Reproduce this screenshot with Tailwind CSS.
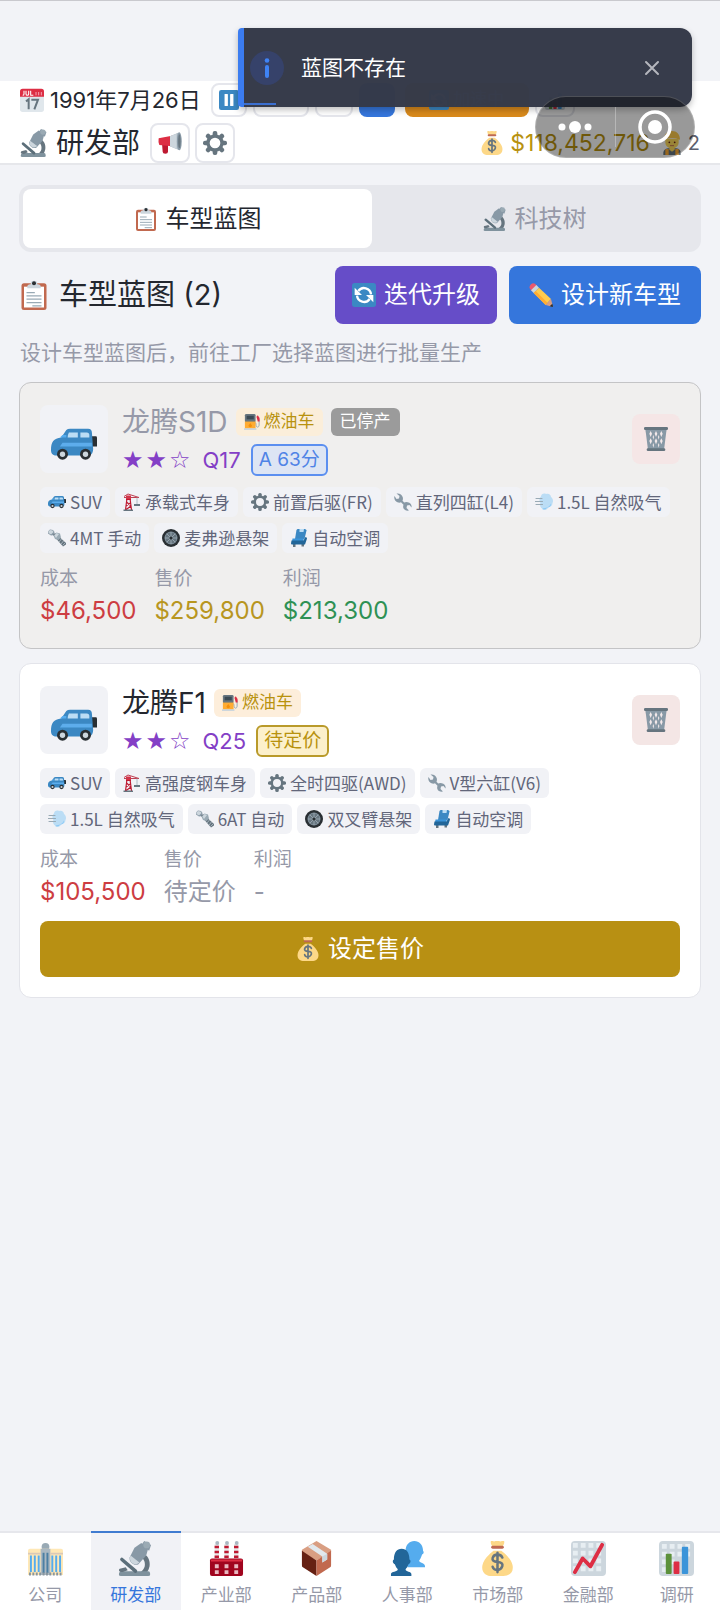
<!DOCTYPE html>
<html lang="zh-CN">
<head>
<meta charset="utf-8">
<meta name="viewport" content="width=device-width, initial-scale=1">
<title>研发部</title>
<script src="https://cdn.jsdelivr.net/npm/@tailwindcss/browser@4"></script>
</head>
<body class="min-h-screen flex flex-col bg-[#f2f3f7] border-t border-[#c9c9ce] text-[#24272f] font-['Inter','Noto_Sans_CJK_SC',sans-serif]">

<svg class="hidden" aria-hidden="true">
  <symbol id="calendar" viewBox="0 0 36 36"><path fill="#E0E7EC" d="M36 32a4 4 0 0 1-4 4H4a4 4 0 0 1-4-4V9h36z"/><path fill="#DD2E44" d="M0 13V5a4 4 0 0 1 4-4h28a4 4 0 0 1 4 4v8z"/><path fill="none" stroke="#fff" stroke-width="1.6" d="M6 4v5q0 2-2 2M9 4v5q0 2 2 2t2-2V4M16 4v7h4"/><path stroke="#F4ABBA" stroke-width="1.4" d="M24 6v5M28 6v5M32 6v5"/><path fill="none" stroke="#66757F" stroke-width="3" d="m9 20 4-3v15M17 17.500h10l-5.500 14.500"/></symbol>
  <symbol id="pause" viewBox="0 0 36 36"><rect width="36" height="36" rx="4" fill="#3B88C3"/><rect x="10" y="7" width="6" height="22" rx="1" fill="#fff"/><rect x="20" y="7" width="6" height="22" rx="1" fill="#fff"/></symbol>
  <symbol id="scope" viewBox="0 0 36 36"><path fill="#66757F" d="M19 35s7.500-4 8.500-9-2-9-5-10l2-4c6 2 9 8 8 14-1 5-4 8-5 9z"/><path fill="#7F929D" d="M4 31h27q2 0 2 2.500V35q0 1-2 1H3q-2 0-2-1v-1q0-3 3-3z"/><path fill="#66757F" d="M1 30q0-2 3-2l4-1 2 3-5 2q-4 0-4-2z"/><path stroke="#5C6F7A" stroke-width="3.600" stroke-linecap="round" d="m4 19 14 12"/><path fill="#8899A6" d="m17 7 7-5 7 6-2 7-8 9c-4 2-10-2-9-7z"/><path fill="#CCD6DD" d="m13 15 9 7c-3 3-7 2-9-1-1-2-1-4 0-6z"/><path fill="#8899A6" d="m24 4 3-4 7 4-2 6z"/><circle cx="29.500" cy="4" r="3.500" fill="#9AAAB4"/></symbol>
  <symbol id="horn" viewBox="0 0 36 36"><path fill="#BE1931" d="M6 18h9v13q0 3-4 3t-4-3z"/><path fill="#DD2E44" d="m1 11 20-4v16L2 21q-2-4-1-10z"/><path fill="#AAB8C2" d="m18 8 14-6v27l-14-6z"/><path fill="#CCD6DD" d="m18 8 10-4v23l-10-4z"/><ellipse cx="32" cy="15.500" rx="3.600" ry="13.500" fill="#8899A6"/><ellipse cx="32" cy="15.500" rx="1.800" ry="10.500" fill="#66757F"/></symbol>
  <symbol id="gear" viewBox="0 0 36 36"><g fill="#66757F"><rect id="tooth" x="14.500" y="0" width="7" height="9" rx="3"/><use href="#tooth" transform="rotate(45 18 18)"/><use href="#tooth" transform="rotate(90 18 18)"/><use href="#tooth" transform="rotate(135 18 18)"/><use href="#tooth" transform="rotate(180 18 18)"/><use href="#tooth" transform="rotate(225 18 18)"/><use href="#tooth" transform="rotate(270 18 18)"/><use href="#tooth" transform="rotate(315 18 18)"/></g><circle cx="18" cy="18" r="10.500" fill="none" stroke="#66757F" stroke-width="5"/></symbol>
  <symbol id="bag" viewBox="0 0 36 36"><path fill="#FDD888" d="M22 10s10 7 11.500 15C35 33 29 36 24 36H12C7 36 1 33 2.500 25 4 17 14 10 14 10z"/><path fill="#FDD888" d="M11 1q0-1.500 2-1 1.500 1 3 0 2-1 3.500 0 1.500 1 3 0 2.500-1 2.500 1c0 2-1 4-2.500 5h-9C12 5 11 3 11 1z"/><rect x="11.500" y="5" width="13" height="3" rx="1.500" fill="#BF6952"/><path fill="none" stroke="#67757F" stroke-width="2.600" stroke-linecap="round" d="M23 17q-1-3-5-3t-5 3.500 5 4 5 4.200-5 4-5-3.200M18 12v20"/></symbol>
  <symbol id="worker" viewBox="0 0 36 36"><path fill="#66757F" d="M5 36v-3c0-5 5-7 8-7h10c4 0 8 2 8 7v3z"/><path fill="#FFAC33" d="M8 27h5v9H8zM23 27h5v9h-5z"/><path fill="#FFDC5D" d="M14 22h8v6l-4 3-4-3z"/><path fill="#FFDC5D" d="M8 12h20v5c0 6-5 9-10 9S8 23 8 17z"/><path fill="#FFCC4D" d="M6 13C6 5 11 0 18 0s12 5 12 13q-12-4-24 0z"/><circle cx="14" cy="17" r="1.300" fill="#662113"/><circle cx="22" cy="17" r="1.300" fill="#662113"/><path stroke="#C1694F" stroke-width="1.400" d="M15 22h6"/></symbol>
  <symbol id="clip" viewBox="0 0 36 36"><rect x="3" y="4" width="30" height="32" rx="3" fill="#C1694F"/><path fill="#fff" d="M6 8h24v25H6z"/><path fill="#CCD6DD" d="M10 10q-1-5 4-5 0-4 4-4t4 4q5 0 4 5z"/><circle cx="18" cy="4" r="2.400" fill="#292F33"/><path stroke="#99AAB5" stroke-width="1.500" d="M9 15h10M9 19h18M9 23h18M9 27h18M16 31h11"/></symbol>
  <symbol id="refresh" viewBox="0 0 36 36"><rect width="36" height="36" rx="4" fill="#3B88C3"/><path fill="none" stroke="#fff" stroke-width="3.500" d="M28.500 17A10.500 10.500 0 0 0 9.500 12M7.500 19a10.500 10.500 0 0 0 19 5"/><path fill="#fff" d="M4 7v11h11zM32 29V18H21z"/></symbol>
  <symbol id="pencil" viewBox="0 0 36 36"><path fill="#EA596E" d="M1 8q-1-3 2-6t6-1l3 3-8 8z"/><path fill="#CCD6DD" d="m3 11 8-8 4 4-8 8z"/><path fill="#FFCC4D" d="m7 15 8-8 18 17-8 9z"/><path fill="#FFAC33" d="m7 15 3-3 18 18-3 3z"/><path fill="#D99E82" d="m25 33 8-9 3 12z"/><path fill="#292F33" d="m31 35 4-4 1 4q0 1-1 1z"/></symbol>
  <symbol id="car" viewBox="0 0 36 36"><path fill="#292F33" d="M32 12h3q1 0 1 1v7h-4z"/><path fill="#3B88C3" d="M12 7q1-1 3-1h14q3 0 3 3l1 13q0 4-3 5H3q-3-1-3-4c0-7 2-9 8-10z"/><path fill="#BBDDF5" d="M14 9h7v4h-8q0-2 1-4zM23 9h5q2 0 2 2v2h-7z"/><path fill="#5DADEC" d="M9 17h23v3H7z"/><path fill="#55ACEE" d="M9 11h3v2H7z"/><circle cx="9" cy="26" r="4.300" fill="#292F33"/><circle cx="9" cy="26" r="2.100" fill="#CCD6DD"/><circle cx="27" cy="26" r="4.300" fill="#292F33"/><circle cx="27" cy="26" r="2.100" fill="#CCD6DD"/></symbol>
  <symbol id="fuel" viewBox="0 0 36 36"><path fill="none" stroke="#99AAB5" stroke-width="2.200" d="M24 19q4 0 3 6c0 6 7 6 7 0V13l-3-5"/><path fill="#DD2E44" d="m28 6 3-3 4 6v8h-4z"/><rect x="2" y="0" width="24" height="19" rx="3" fill="#66757F"/><path fill="#FFAC33" d="M2 17h24v16H2z"/><path fill="#3B4A54" d="M6 4h16v8H6z"/><path fill="#F4900C" d="m14 20 4 6q0 4-4 4t-4-4z"/><path fill="#CCD6DD" d="M0 32h28v4H0z"/></symbol>
  <symbol id="crane" viewBox="0 0 36 36"><path fill="none" stroke="#BE1931" stroke-width="2.400" d="M5 34 8 10h6l3 24M6 26l10-7M7 18l9 8M5 34l11-8M6 13h10"/><path fill="#DD2E44" d="M6 5h10v7H6z"/><path fill="none" stroke="#BE4052" stroke-width="2" d="m2 7 8-5 22 7H2"/><path stroke="#99AAB5" stroke-width="1.500" d="M28 9v13"/><path fill="#66757F" d="M22 22h12v4H22z"/><path fill="#66757F" d="M1 33h19v3H1z"/></symbol>
  <symbol id="wrench" viewBox="0 0 36 36"><path fill="#8899A6" d="M27.500 18.500q-4-1-7 .5L17 15.500q1.500-3 .5-7C16 3 11 0 5 1l6 5-1 5-5 1-4-6c-2 6 2 12 7 13 3 .7 5 0 6-.7l5 5c-.7 2-1 4-.3 6.500C20 34 25 36 30 35l-5-5 1-5 5-1 4 5c1-5-2-9.500-7.500-10.500z"/></symbol>
  <symbol id="wind" viewBox="0 0 36 36"><path fill="#BBDDF5" d="M12 7c0-5 6-7 10-5 5-2 10 1 10 6 4 3 5 8 3 12 0 5-4 8-8 8-3 7-11 8-13 3-4-2-5-8-3-11-3-4-3-9 1-13z"/><path fill="#8CCAF7" d="M20 30c5-1 9-3 12-9 1 6-5 9-8 8-2 4-6 5-9 2z"/><path fill="none" stroke="#99AAB5" stroke-width="2.200" stroke-linecap="round" d="M2 11h12M0 17h15M2 23h13"/></symbol>
  <symbol id="bolt" viewBox="0 0 36 36"><path fill="#8899A6" d="m4 1 6 1 3 4-1 6-6 1-6-4V5z"/><path fill="#CCD6DD" d="m4 2 5 1 2 3-5 5-5-3V5z"/><path fill="#66757F" d="m10 12 4-4 22 20v3l-6 4z"/><path stroke="#AAB8C2" stroke-width="1.800" d="m22 26 5-6M26 30l5-6M29 33l6-6"/><path fill="#9AAAB4" d="m17 7 7 2 2 8-5 5-7-2-3-7z"/><path fill="#CCD6DD" d="m17 8 5 2-6 8-3-5z"/></symbol>
  <symbol id="wheel" viewBox="0 0 36 36"><circle cx="18" cy="18" r="18" fill="#292F33"/><circle cx="18" cy="18" r="12.500" fill="#66757F"/><circle cx="18" cy="18" r="12" fill="none" stroke="#8899A6" stroke-width="1.500"/><path stroke="#AAB8C2" stroke-width="1.400" d="M18 6v24M6 18h24M9.500 9.500l17 17M9.500 26.500l17-17"/><circle cx="18" cy="18" r="3" fill="#292F33"/></symbol>
  <symbol id="seat" viewBox="0 0 36 36"><path fill="#66757F" d="M6 30h5v6H6zM23 30h5v5h-5z"/><path fill="#3B88C3" d="M13 2q1-2 3-2h13q4 0 4 3l-4 17H10z"/><path fill="#BBDDF5" d="M19 0h9l-1 6h-8z"/><path fill="#3B94D9" d="M5 19h23l-2 6H4z"/><path fill="#226699" d="M3 23h24l4-7q3 0 3 3l-4 12H4q-2 0-2-2z"/></symbol>
  <symbol id="trash" viewBox="0 0 36 36"><path fill="#8899A6" d="M2 3h32l-4 31H6z"/><g fill="#F3E9EA"><path d="m10 6 2 4-2 5-2-5zM18 6l2 4-2 5-2-5zM26 6l2 4-2 5-2-5zM10 17l2 4-2 5-2-5zM18 17l2 4-2 5-2-5zM26 17l2 4-2 5-2-5zM14 12l1 3-1 4-1-4zM22 12l1 3-1 4-1-4zM14 24l1 3-1 4-1-4zM22 24l1 3-1 4-1-4z"/></g><rect x="0" y="0" width="36" height="4.500" rx="2" fill="#66757F"/><rect x="4" y="32" width="28" height="4" rx="2" fill="#66757F"/></symbol>
  <symbol id="building" viewBox="0 0 36 36"><circle cx="18" cy="6" r="4" fill="#99AAB5"/><path fill="#FFE8B6" d="M0 10q0-2 2-2h32q2 0 2 2v25H0z"/><path fill="#AAB8C2" d="M13 8h10v27H13z"/><path fill="#DCC9B6" d="M0 12h13v2H0zM23 12h13v2H23z"/><path stroke="#55ACEE" stroke-width="2" d="M3 15v17M7 15v17M11 15v17M25 15v17M29 15v17M33 15v17"/><path stroke="#4C7FA3" stroke-width="2" d="M16 12v21M20 12v21"/><path stroke="#88959E" stroke-width="3" stroke-dasharray="2 1.500" d="M1 34h34"/></symbol>
  <symbol id="factory" viewBox="0 0 36 36"><g stroke-width="4.500"><path stroke="#E6E7E8" d="M8 3v16M18 3v16M28 3v16"/><path stroke="#BE1931" stroke-dasharray="2.500 2.500" d="M8 5v14M18 5v14M28 5v14"/></g><circle cx="8.500" cy="2" r="2" fill="#AAB8C2"/><circle cx="18.500" cy="2" r="2" fill="#AAB8C2"/><circle cx="28.500" cy="2" r="2" fill="#AAB8C2"/><rect x="1" y="18" width="34" height="18" rx="2" fill="#A0041E"/><path stroke="#DD2E44" stroke-width="2" d="M2 20h32"/><path fill="#E8B8C0" d="M6 24h4v4H6zM16 24h4v4h-4zM26 24h4v4h-4zM6 30h4v4H6zM16 30h4v4h-4zM26 30h4v4h-4z"/></symbol>
  <symbol id="box" viewBox="0 0 36 36"><path fill="#D99E82" d="m18 0 15 9v2L18 20 3 11V9z"/><path fill="#662113" d="m3 10 15 10v16L4 27q-1 0-1-2z"/><path fill="#C1694F" d="m18 20 15-10v15q0 2-1 2l-14 9z"/><path fill="#E1E8ED" d="m9 6 5-3 15 10v6l-5 3v-6z"/><path fill="#CCD6DD" d="m24 16 5-3v6l-5 3z"/></symbol>
  <symbol id="people" viewBox="0 0 36 36"><path fill="#55ACEE" d="M16 10c0-6 4-10 9-10s9 4 9 10c1 1 1 3-1 4-1 3-2 5-3 6 0 3 6 2 6 6v1H18z"/><path fill="#226699" d="M4 19c0-7 3-11 8-11s8 4 8 11c2 1 1 4-1 5-1 3-2 4-3 5 0 3 6 2 6 5v2H1v-2c0-3 7-2 7-5-1-1-2-2-3-5-2-1-3-4-1-5z"/></symbol>
  <symbol id="chartup" viewBox="0 0 36 36"><rect width="36" height="36" rx="4" fill="#CCD6DD"/><path fill="#E7EEF2" d="M2 2h5v5H2zM10 2h5v5h-5zM18 2h5v5h-5zM26 2h5v5h-5zM2 10h5v5H2zM10 10h5v5h-5zM18 10h5v5h-5zM26 10h5v5h-5zM2 18h5v5H2zM10 18h5v5h-5zM18 18h5v5h-5zM26 18h5v5h-5zM2 26h5v5H2zM10 26h5v5h-5zM18 26h5v5h-5zM26 26h5v5h-5z"/><path fill="none" stroke="#DD2E44" stroke-width="4" stroke-linecap="round" stroke-linejoin="round" d="m4 32 8-14 8 8L32 4"/></symbol>
  <symbol id="bars" viewBox="0 0 36 36"><rect width="36" height="36" rx="4" fill="#CCD6DD"/><path fill="#E7EEF2" d="M3 3h5v5H3zM11 3h5v5h-5zM19 3h5v5h-5zM27 3h5v5h-5zM3 11h5v5H3zM11 11h5v5h-5zM19 11h5v5h-5zM27 11h5v5h-5zM3 19h5v5H3zM11 19h5v5h-5zM3 27h5v5H3z"/><rect x="7" y="13" width="6" height="21" rx="1" fill="#5C913B"/><rect x="15" y="21" width="6" height="13" rx="1" fill="#DD2E44"/><rect x="23.500" y="6" width="6.500" height="28" rx="1" fill="#3B94D9"/></symbol>
</svg>

<header class="mt-20 bg-white border-b-2 border-[#e6e7eb] px-5 pt-0.5 flex flex-col gap-1.5">
  <div class="flex items-center gap-1.5 h-[34px]">
    <p class="flex items-center gap-1.5 text-[22px] whitespace-nowrap mr-1"><svg class="size-6"><use href="#calendar"/></svg>1991年7月26日</p>
    <button aria-label="暂停" class="w-9 h-[34px] rounded-lg border-2 border-[#e5e6ec] flex items-center justify-center"><svg class="size-5"><use href="#pause"/></svg></button>
    <button aria-label="1倍速" class="w-14 h-[34px] rounded-lg border-2 border-[#e5e6ec]"></button>
    <button aria-label="2倍速" class="w-[38px] h-[34px] rounded-lg border-2 border-[#e5e6ec]"></button>
    <button aria-label="3倍速" class="w-9 h-[34px] rounded-lg bg-[#3576dc]"></button>
    <button class="ml-1 w-[124px] h-[34px] rounded-lg bg-[#d98a1c] text-white text-[17px] flex items-center justify-center gap-1"><svg class="size-5"><use href="#refresh"/></svg>加速中</button>
    <button aria-label="统计" class="w-10 h-[34px] rounded-lg border-2 border-[#e5e6ec] flex items-center justify-center"><svg class="size-5"><use href="#bars"/></svg></button>
  </div>
  <div class="flex items-center h-10">
    <h1 class="flex items-center gap-2 text-[28px] leading-10"><svg class="size-7"><use href="#scope"/></svg>研发部</h1>
    <button aria-label="公告" class="ml-2.5 w-10 h-10 rounded-lg border-2 border-[#e5e6ec] flex items-center justify-center"><svg class="size-6"><use href="#horn"/></svg></button>
    <button aria-label="设置" class="ml-[5px] w-10 h-10 rounded-lg border-2 border-[#e5e6ec] flex items-center justify-center"><svg class="size-6"><use href="#gear"/></svg></button>
    <p class="ml-auto flex items-center gap-1.5 text-[23px] text-[#b8920f]"><svg class="size-6"><use href="#bag"/></svg>$118,452,716</p>
    <p class="ml-2.5 flex items-center gap-1 text-xl text-[#5b5f6e]"><svg class="size-6"><use href="#worker"/></svg>2</p>
  </div>
</header>

<main class="flex-1 px-[19px] pt-5 flex flex-col gap-3.5">
  <div role="tablist" class="flex bg-[#e6e7ec] rounded-xl p-1 text-2xl">
    <button role="tab" aria-selected="true" class="flex-auto h-[59px] rounded-lg bg-white flex items-center justify-center gap-2"><svg class="size-6"><use href="#clip"/></svg>车型蓝图</button>
    <button role="tab" aria-selected="false" class="flex-auto h-[59px] flex items-center justify-center gap-2 text-[#9699a8]"><svg class="size-6"><use href="#scope"/></svg>科技树</button>
  </div>

  <div class="flex items-center gap-3 h-[58px] text-2xl">
    <h2 class="flex items-center gap-2.5 text-[29px] whitespace-nowrap mr-auto"><svg class="size-[30px]"><use href="#clip"/></svg>车型蓝图 (2)</h2>
    <button class="h-[58px] px-[17px] rounded-lg bg-[#664dc8] text-white flex items-center gap-2 whitespace-nowrap"><svg class="size-6"><use href="#refresh"/></svg>迭代升级</button>
    <button class="h-[58px] px-5 rounded-lg bg-[#3576dc] text-white flex items-center gap-2 whitespace-nowrap"><svg class="size-6"><use href="#pencil"/></svg>设计新车型</button>
  </div>

  <p class="px-px text-[21px] leading-[30px] text-[#9699a8]">设计车型蓝图后，前往工厂选择蓝图进行批量生产</p>

  <article class="rounded-xl border border-[#c4c4c6] bg-[#f0efee] px-5 pt-[19px] pb-5">
    <div class="flex items-center gap-3.5">
      <div class="size-[68px] rounded-lg bg-[#f1f2f6] flex items-center justify-center"><svg class="size-[46px] mt-2.5"><use href="#car"/></svg></div>
      <div class="flex-1 flex flex-col gap-0.5">
        <div class="flex items-center gap-2 h-10">
          <h3 class="text-[28px] text-[#9699a8]">龙腾S1D</h3>
          <span class="h-7 px-2 rounded-md bg-[#fbeeda] text-[#b8920f] text-[17px] flex items-center gap-1"><svg class="size-4"><use href="#fuel"/></svg>燃油车</span>
          <span class="h-7 px-[9px] rounded-md bg-[#9b9b9b] text-white text-[17px] flex items-center">已停产</span>
        </div>
        <div class="flex items-center h-8 text-[22px]">
          <span class="flex gap-0.5 text-[24px] font-['DejaVu_Sans',sans-serif] text-[#843fc6]" role="img" aria-label="2星"><span>★</span><span>★</span><span>☆</span></span>
          <span class="ml-3 text-[#843fc6]">Q17</span>
          <span class="ml-2.5 h-8 px-1.5 rounded-md border-2 border-[#5b8ff0] bg-[#dde5f4] text-[#4f83e6] text-[19px] flex items-center">A 63分</span>
        </div>
      </div>
      <button aria-label="删除" class="w-12 h-[50px] rounded-lg bg-[#f5e6e6] flex items-center justify-center"><svg class="size-6"><use href="#trash"/></svg></button>
    </div>
    <ul class="mt-[11px] flex flex-wrap gap-x-[5px] gap-y-1.5 text-[17px] leading-[30px] text-[#62667a] font-['Noto_Sans_CJK_SC',sans-serif]">
      <li class="flex items-center gap-1 px-2 rounded-md bg-[#f1f2f6]"><svg class="size-[18px]"><use href="#car"/></svg>SUV</li>
      <li class="flex items-center gap-1 px-2 rounded-md bg-[#f1f2f6]"><svg class="size-[18px]"><use href="#crane"/></svg>承载式车身</li>
      <li class="flex items-center gap-1 px-2 rounded-md bg-[#f1f2f6]"><svg class="size-[18px]"><use href="#gear"/></svg>前置后驱(FR)</li>
      <li class="flex items-center gap-1 px-2 rounded-md bg-[#f1f2f6]"><svg class="size-[18px]"><use href="#wrench"/></svg>直列四缸(L4)</li>
      <li class="flex items-center gap-1 px-2 rounded-md bg-[#f1f2f6]"><svg class="size-[18px]"><use href="#wind"/></svg>1.5L 自然吸气</li>
      <li class="flex items-center gap-1 px-2 rounded-md bg-[#f1f2f6]"><svg class="size-[18px]"><use href="#bolt"/></svg>4MT 手动</li>
      <li class="flex items-center gap-1 px-2 rounded-md bg-[#f1f2f6]"><svg class="size-[18px]"><use href="#wheel"/></svg>麦弗逊悬架</li>
      <li class="flex items-center gap-1 px-2 rounded-md bg-[#f1f2f6]"><svg class="size-[18px]"><use href="#seat"/></svg>自动空调</li>
    </ul>
    <dl class="mt-3 flex gap-[18px] text-2xl leading-[35px]">
      <div><dt class="text-[19px] leading-7 text-[#9699a8]">成本</dt><dd class="text-[#cd3d42]">$46,500</dd></div>
      <div><dt class="text-[19px] leading-7 text-[#9699a8]">售价</dt><dd class="text-[#b8961f]">$259,800</dd></div>
      <div><dt class="text-[19px] leading-7 text-[#9699a8]">利润</dt><dd class="text-[#2e9154]">$213,300</dd></div>
    </dl>
  </article>

  <article class="rounded-xl border border-[#e3e4ea] bg-white px-5 pt-[19px] pb-5">
    <div class="flex items-center gap-3.5">
      <div class="size-[68px] rounded-lg bg-[#f1f2f6] flex items-center justify-center"><svg class="size-[46px] mt-2.5"><use href="#car"/></svg></div>
      <div class="flex-1 flex flex-col gap-0.5">
        <div class="flex items-center gap-2 h-10">
          <h3 class="text-[28px]">龙腾F1</h3>
          <span class="h-7 px-2 rounded-md bg-[#fdeedb] text-[#b8920f] text-[17px] flex items-center gap-1"><svg class="size-4"><use href="#fuel"/></svg>燃油车</span>
        </div>
        <div class="flex items-center h-8 text-[22px]">
          <span class="flex gap-0.5 text-[24px] font-['DejaVu_Sans',sans-serif] text-[#843fc6]" role="img" aria-label="2星"><span>★</span><span>★</span><span>☆</span></span>
          <span class="ml-3 text-[#843fc6]">Q25</span>
          <span class="ml-2.5 h-8 px-1.5 rounded-md border-2 border-[#b99a2a] bg-[#fcf0cb] text-[#b8920f] text-[19px] flex items-center">待定价</span>
        </div>
      </div>
      <button aria-label="删除" class="w-12 h-[50px] rounded-lg bg-[#f4e6e5] flex items-center justify-center"><svg class="size-6"><use href="#trash"/></svg></button>
    </div>
    <ul class="mt-[11px] flex flex-wrap gap-x-[5px] gap-y-1.5 text-[17px] leading-[30px] text-[#62667a] font-['Noto_Sans_CJK_SC',sans-serif]">
      <li class="flex items-center gap-1 px-2 rounded-md bg-[#f1f2f6]"><svg class="size-[18px]"><use href="#car"/></svg>SUV</li>
      <li class="flex items-center gap-1 px-2 rounded-md bg-[#f1f2f6]"><svg class="size-[18px]"><use href="#crane"/></svg>高强度钢车身</li>
      <li class="flex items-center gap-1 px-2 rounded-md bg-[#f1f2f6]"><svg class="size-[18px]"><use href="#gear"/></svg>全时四驱(AWD)</li>
      <li class="flex items-center gap-1 px-2 rounded-md bg-[#f1f2f6]"><svg class="size-[18px]"><use href="#wrench"/></svg>V型六缸(V6)</li>
      <li class="flex items-center gap-1 px-2 rounded-md bg-[#f1f2f6]"><svg class="size-[18px]"><use href="#wind"/></svg>1.5L 自然吸气</li>
      <li class="flex items-center gap-1 px-2 rounded-md bg-[#f1f2f6]"><svg class="size-[18px]"><use href="#bolt"/></svg>6AT 自动</li>
      <li class="flex items-center gap-1 px-2 rounded-md bg-[#f1f2f6]"><svg class="size-[18px]"><use href="#wheel"/></svg>双叉臂悬架</li>
      <li class="flex items-center gap-1 px-2 rounded-md bg-[#f1f2f6]"><svg class="size-[18px]"><use href="#seat"/></svg>自动空调</li>
    </ul>
    <dl class="mt-3 flex gap-[18px] text-2xl leading-[35px]">
      <div><dt class="text-[19px] leading-7 text-[#9699a8]">成本</dt><dd class="text-[#cd3d42]">$105,500</dd></div>
      <div><dt class="text-[19px] leading-7 text-[#9699a8]">售价</dt><dd class="text-[#9699a8]">待定价</dd></div>
      <div><dt class="text-[19px] leading-7 text-[#9699a8]">利润</dt><dd class="text-[#9699a8]">-</dd></div>
    </dl>
    <button class="mt-3 w-full h-14 rounded-lg bg-[#b89013] text-white text-2xl flex items-center justify-center gap-2"><svg class="size-6"><use href="#bag"/></svg>设定售价</button>
  </article>
</main>

<nav class="grid grid-cols-[repeat(7,181fr)_173fr] h-[79px] bg-white border-t-2 border-[#e6e7ec] text-[17px] leading-6 text-[#9699a8] text-center">
  <a href="#" class="flex flex-col items-center gap-[7px] pt-2"><svg class="size-[35px]"><use href="#building"/></svg>公司</a>
  <a href="#" aria-current="page" class="-mt-0.5 border-t-2 border-[#3f7bd0] bg-[#f1f2f6] text-[#3576dc] flex flex-col items-center gap-[7px] pt-2"><svg class="size-[35px]"><use href="#scope"/></svg>研发部</a>
  <a href="#" class="flex flex-col items-center gap-[7px] pt-2"><svg class="size-[35px]"><use href="#factory"/></svg>产业部</a>
  <a href="#" class="flex flex-col items-center gap-[7px] pt-2"><svg class="size-[35px]"><use href="#box"/></svg>产品部</a>
  <a href="#" class="flex flex-col items-center gap-[7px] pt-2"><svg class="size-[35px]"><use href="#people"/></svg>人事部</a>
  <a href="#" class="flex flex-col items-center gap-[7px] pt-2"><svg class="size-[35px]"><use href="#bag"/></svg>市场部</a>
  <a href="#" class="flex flex-col items-center gap-[7px] pt-2"><svg class="size-[35px]"><use href="#chartup"/></svg>金融部</a>
  <a href="#" class="flex flex-col items-center gap-[7px] pt-2"><svg class="size-[35px]"><use href="#bars"/></svg>调研</a>
</nav>

<div role="status" class="absolute top-7 right-7 w-[454px] h-[79px] overflow-hidden rounded-r-xl rounded-l-sm border-l-[6px] border-[#3b7cf0] bg-[#353a49]/99 shadow-[0_3px_6px_rgba(0,0,0,0.25)] flex items-center pl-1.5 pr-7 text-white">
  <span class="size-[34px] rounded-full bg-[#36426a] flex items-center justify-center"><svg class="w-1.5 h-5" viewBox="0 0 6 20" fill="#3f83f5"><circle cx="3" cy="2.500" r="2.300"/><rect x="1" y="7" width="4" height="13" rx="2"/></svg></span>
  <span class="ml-[17px] text-[21px]">蓝图不存在</span>
  <button aria-label="关闭" class="ml-auto size-6 flex items-center justify-center"><svg class="size-4" viewBox="0 0 16 16" stroke="#b4b6bd" stroke-width="2" stroke-linecap="round"><path d="m2 2 12 12M14 2 2 14"/></svg></button>
  <span class="absolute left-0 bottom-0.5 h-0.5 w-8 bg-[#3b6fd0]"></span>
</div>

<div class="absolute top-24 right-[25px] w-40 h-[62px] rounded-full bg-black/40 border border-white/20 flex items-center">
  <button aria-label="更多" class="flex-1 flex items-center justify-center"><svg class="w-9 h-4" viewBox="0 0 36 16" fill="#fff"><circle cx="5" cy="8" r="3.500"/><circle cx="18" cy="8" r="6"/><circle cx="31" cy="8" r="3.500"/></svg></button>
  <span class="w-px h-10 bg-white/30"></span>
  <button aria-label="关闭小程序" class="flex-1 flex items-center justify-center"><svg class="size-[34px]" viewBox="0 0 34 34"><circle cx="17" cy="17" r="15" fill="none" stroke="#fff" stroke-width="3.500"/><circle cx="17" cy="17" r="7" fill="#fff"/></svg></button>
</div>
</body>
</html>
